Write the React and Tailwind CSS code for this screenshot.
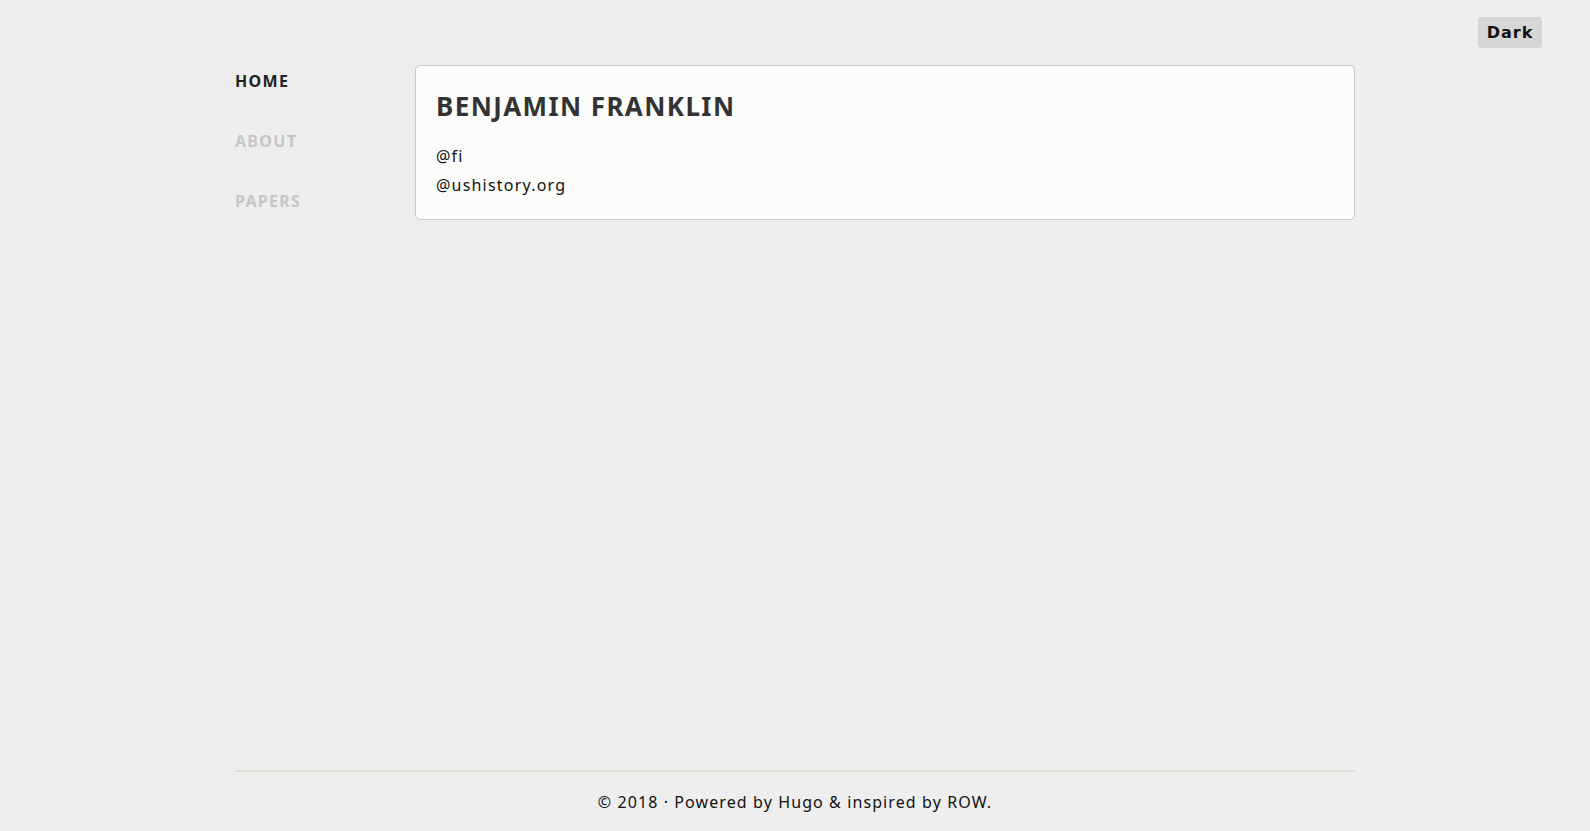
export default function App() {
  const links = [
    { label: "HOME", active: true },
    { label: "ABOUT", active: false },
    { label: "PAPERS", active: false },
  ];

  return (
    <div
      className="relative min-h-screen flex flex-col bg-[#eeeeee] text-[#111]"
      style={{ fontFamily: '"Noto Sans", sans-serif' }}
    >
      {/* theme toggle */}
      <button
        className="absolute top-[17px] right-[48px] w-[64px] h-[31px] rounded-[4px] bg-[#d6d6d6] text-[16px] font-bold tracking-[1px] text-[#111]"
        style={{ fontFamily: '"DejaVu Sans", sans-serif' }}
      >
        Dark
      </button>

      <div className="flex-1 w-[1120px] mx-auto flex pt-[65px]">
        <nav className="w-[180px] shrink-0 flex flex-col gap-[36px] pt-[4px]">
          {links.map((l) => (
            <a
              key={l.label}
              className={`block text-[16px] font-bold leading-[24px] tracking-[1.3px] ${
                l.active ? "text-[#222]" : "text-[#c6c6c6]"
              }`}
            >
              {l.label}
            </a>
          ))}
        </nav>

        <main className="w-[940px]">
          <div className="border border-[#c8c8c8] rounded-[5px] bg-[#fcfcfa] px-[20px] pt-[20px] pb-[19px]">
            <h1 className="text-[26px] font-bold leading-[40px] tracking-[1.4px] text-[#333]">
              BENJAMIN FRANKLIN
            </h1>
            <div className="mt-[16px] text-[16px] leading-[29px] tracking-[1.2px]">
              <p>@fi</p>
              <p>@ushistory.org</p>
            </div>
          </div>
        </main>
      </div>

      <footer className="w-[1120px] mx-auto border-t-2 border-[#e0ddd5] pt-[18px] pb-[17px] text-center text-[16px] leading-[24px] tracking-[1.1px]">
        © 2018 · Powered by Hugo &amp; inspired by ROW.
      </footer>
    </div>
  );
}
